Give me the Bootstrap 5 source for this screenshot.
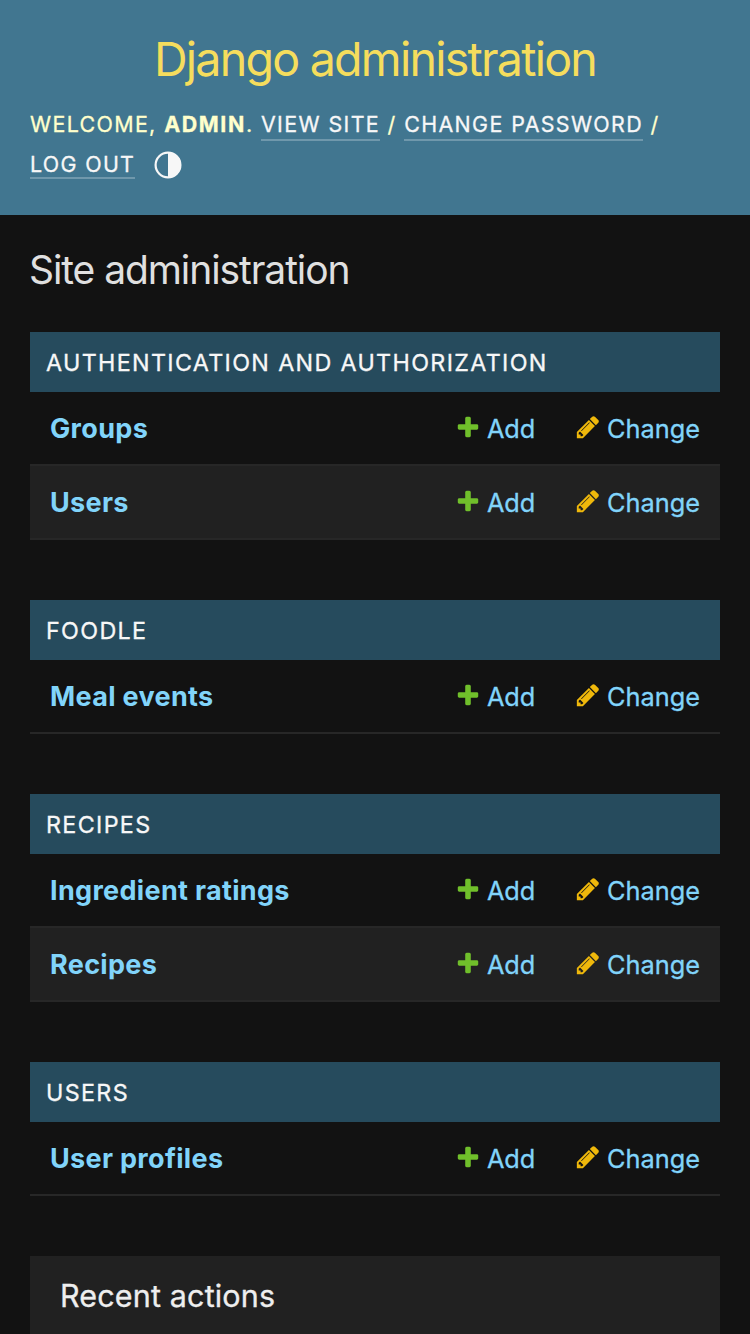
<!DOCTYPE html>
<html lang="en" data-bs-theme="dark">
<head>
<meta charset="utf-8">
<meta name="viewport" content="width=device-width, initial-scale=1">
<title>Site administration | Django site admin</title>
<link href="https://cdn.jsdelivr.net/npm/bootstrap@5.3.0/dist/css/bootstrap.min.css" rel="stylesheet">
<style>
  body { background: #121212; color: #eee; font-family: Inter, "Liberation Sans", sans-serif; font-size: 25.3px; font-weight: 400; height: 1334px; overflow: hidden; }
  a { color: #81d4fa; text-decoration: none; }
  .site-head { background: #417690; height: 215px; padding: 30px 30px 0; color: #ffc; }
  .site-name { font-size: 46.6px; font-weight: 400; line-height: 58px; letter-spacing: -1.77px; color: #f5dd5d; }
  .user-tools { margin-top: 16px; font-size: 21.4px; line-height: 40px; letter-spacing: 1.36px; word-spacing: .2px; text-transform: uppercase; white-space: nowrap; }
  .user-tools strong { letter-spacing: 1.6px; }
  .user-tools, .app-caption, .act-link, .recent-box { -webkit-text-stroke: .3px currentColor; }
  .user-tools a { color: #f7f7f7; border-bottom: 2px solid rgba(255,255,255,.25); padding-bottom: 2px; }
  .user-tools a.logout { padding-bottom: 0; letter-spacing: 1.3px; }
  .theme-icon { width: 28px; height: 28px; margin: 2px 0 0 19px; }
  .page-wrap { margin: 0 30px; }
  .page-title { font-size: 39px; font-weight: 400; line-height: 48px; letter-spacing: -1.08px; color: #e0e0e0; margin: 31px 0 38px -1px; }
  .app-module { margin-bottom: 60px; }
  .app-caption { background: #264b5d; color: #f7f7f7; height: 60px; padding: 2px 16px 0; font-size: 23.3px; letter-spacing: 1.34px; text-transform: uppercase; }
  .model-row { height: 74px; padding: 2px 20px 0; border-bottom: 2px solid #272727; }
  .model-row:nth-child(odd) { background: #212121; }
  .model-name { font-weight: 700; font-size: 27px; letter-spacing: .33px; }
  .act-link svg { width: 26px; height: 26px; margin-right: 6px; margin-top: -4px; }
  .act-add { width: 120px; letter-spacing: -.1px; }
  .act-change { width: 125px; letter-spacing: .03px; }
  .recent-box { background: #212121; height: 78px; padding: 16px 30px; font-size: 30.5px; line-height: 48px; letter-spacing: .15px; }
</style>
</head>
<body>
<svg class="d-none">
  <symbol id="plus" viewBox="0 0 1792 1792"><path fill="#70bf2b" d="M1600 796v192q0 40-28 68t-68 28h-416v416q0 40-28 68t-68 28h-192q-40 0-68-28t-28-68v-416h-416q-40 0-68-28t-28-68v-192q0-40 28-68t68-28h416v-416q0-40 28-68t68-28h192q40 0 68 28t28 68v416h416q40 0 68 28t28 68z"/></symbol>
  <symbol id="pencil" viewBox="0 0 1792 1792"><path fill="#efb80b" d="M491 1536l91-91-235-235-91 91v107h128v128h107zm523-928q0-22-22-22-10 0-17 7l-542 542q-7 7-7 17 0 22 22 22 10 0 17-7l542-542q7-7 7-17zm-54-192l416 416-832 832h-416v-416zm683 96q0 53-37 90l-166 166-416-416 166-165q36-38 90-38 53 0 91 38l235 234q37 39 37 91z"/></symbol>
</svg>
<header class="site-head">
  <h1 class="site-name text-center mb-0">Django administration</h1>
  <div class="user-tools">
    <div>Welcome, <strong>admin</strong>. <a href="#">View site</a> / <a href="#">Change password</a> /</div>
    <div class="d-flex align-items-center"><span><a class="logout" href="#">Log out</a></span>
      <svg class="theme-icon" viewBox="0 0 28 28"><circle cx="14" cy="14" r="12.4" fill="none" stroke="#f7f7f7" stroke-width="2.2"/><path fill="#f7f7f7" d="M14 1a13 13 0 0 1 0 26z"/></svg>
    </div>
  </div>
</header>
<main class="page-wrap">
  <h2 class="page-title">Site administration</h2>

  <section class="app-module">
    <div class="app-caption d-flex align-items-center">Authentication and Authorization</div>
    <div class="model-row d-flex align-items-center"><a class="model-name me-auto" href="#">Groups</a><a class="act-link act-add d-flex align-items-center" href="#"><svg><use href="#plus"/></svg>Add</a><a class="act-link act-change d-flex align-items-center" href="#"><svg><use href="#pencil"/></svg>Change</a></div>
    <div class="model-row d-flex align-items-center"><a class="model-name me-auto" href="#">Users</a><a class="act-link act-add d-flex align-items-center" href="#"><svg><use href="#plus"/></svg>Add</a><a class="act-link act-change d-flex align-items-center" href="#"><svg><use href="#pencil"/></svg>Change</a></div>
  </section>

  <section class="app-module">
    <div class="app-caption d-flex align-items-center">Foodle</div>
    <div class="model-row d-flex align-items-center"><a class="model-name me-auto" href="#">Meal events</a><a class="act-link act-add d-flex align-items-center" href="#"><svg><use href="#plus"/></svg>Add</a><a class="act-link act-change d-flex align-items-center" href="#"><svg><use href="#pencil"/></svg>Change</a></div>
  </section>

  <section class="app-module">
    <div class="app-caption d-flex align-items-center">Recipes</div>
    <div class="model-row d-flex align-items-center"><a class="model-name me-auto" href="#">Ingredient ratings</a><a class="act-link act-add d-flex align-items-center" href="#"><svg><use href="#plus"/></svg>Add</a><a class="act-link act-change d-flex align-items-center" href="#"><svg><use href="#pencil"/></svg>Change</a></div>
    <div class="model-row d-flex align-items-center"><a class="model-name me-auto" href="#">Recipes</a><a class="act-link act-add d-flex align-items-center" href="#"><svg><use href="#plus"/></svg>Add</a><a class="act-link act-change d-flex align-items-center" href="#"><svg><use href="#pencil"/></svg>Change</a></div>
  </section>

  <section class="app-module">
    <div class="app-caption d-flex align-items-center">Users</div>
    <div class="model-row d-flex align-items-center"><a class="model-name me-auto" href="#">User profiles</a><a class="act-link act-add d-flex align-items-center" href="#"><svg><use href="#plus"/></svg>Add</a><a class="act-link act-change d-flex align-items-center" href="#"><svg><use href="#pencil"/></svg>Change</a></div>
  </section>

  <aside class="recent-box">Recent actions</aside>
</main>
<script src="https://cdn.jsdelivr.net/npm/bootstrap@5.3.0/dist/js/bootstrap.bundle.min.js"></script>
</body>
</html>
